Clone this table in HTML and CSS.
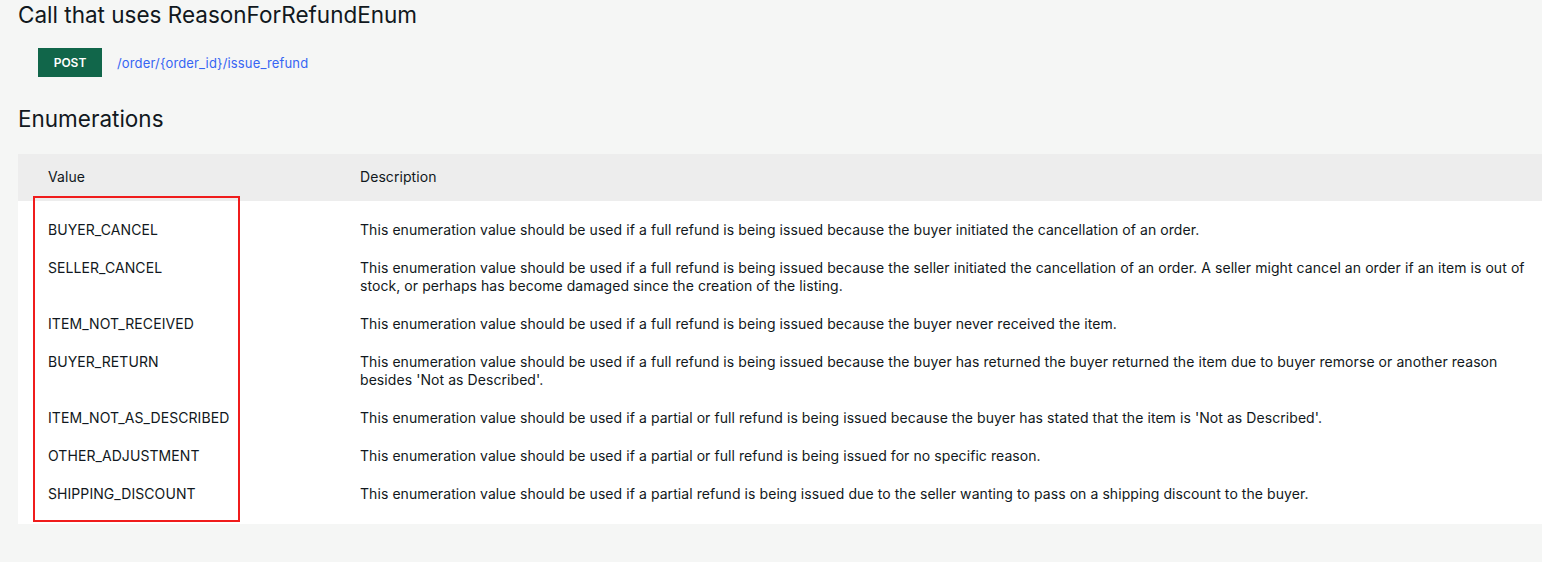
FILE: index.html
```html
<!DOCTYPE html>
<html lang="en">
<head>
    <meta charset="UTF-8">
    <meta name="viewport" content="width=device-width, initial-scale=1.0">
    <title>ReasonForRefundEnum</title>
    <link rel="stylesheet" href="styles.css">
</head>
<body>
    <div class="page">
        <!-- call section -->
        <h2 class="section-title">Call that uses ReasonForRefundEnum</h2>
        <div class="call-row">
            <span class="method">POST</span>
            <a class="call-link" href="#">/order/{order_id}/issue_refund</a>
        </div>

        <!-- enum table -->
        <h2 class="section-title enum-title">Enumerations</h2>
        <div class="table-wrap">
            <table class="enum-table">
                <thead>
                    <tr>
                        <th class="col-value">Value</th>
                        <th>Description</th>
                    </tr>
                </thead>
                <tbody>
                    <tr class="spacer"><td colspan="2"></td></tr>
                    <tr>
                        <td class="col-value">BUYER_CANCEL</td>
                        <td>This enumeration value should be used if a full refund is being issued because the buyer initiated the cancellation of an order.</td>
                    </tr>
                    <tr>
                        <td class="col-value">SELLER_CANCEL</td>
                        <td>This enumeration value should be used if a full refund is being issued because the seller initiated the cancellation of an order. A seller might cancel an order if an item is out of stock, or perhaps has become damaged since the creation of the listing.</td>
                    </tr>
                    <tr>
                        <td class="col-value">ITEM_NOT_RECEIVED</td>
                        <td>This enumeration value should be used if a full refund is being issued because the buyer never received the item.</td>
                    </tr>
                    <tr>
                        <td class="col-value">BUYER_RETURN</td>
                        <td>This enumeration value should be used if a full refund is being issued because the buyer has returned the buyer returned the item due to buyer remorse or another reason besides 'Not as Described'.</td>
                    </tr>
                    <tr>
                        <td class="col-value">ITEM_NOT_AS_DESCRIBED</td>
                        <td>This enumeration value should be used if a partial or full refund is being issued because the buyer has stated that the item is 'Not as Described'.</td>
                    </tr>
                    <tr>
                        <td class="col-value">OTHER_ADJUSTMENT</td>
                        <td>This enumeration value should be used if a partial or full refund is being issued for no specific reason.</td>
                    </tr>
                    <tr>
                        <td class="col-value">SHIPPING_DISCOUNT</td>
                        <td>This enumeration value should be used if a partial refund is being issued due to the seller wanting to pass on a shipping discount to the buyer.</td>
                    </tr>
                    <tr class="spacer spacer-end"><td colspan="2"></td></tr>
                </tbody>
            </table>
            <!-- annotation box -->
            <div class="highlight"></div>
        </div>
    </div>
</body>
</html>
```

FILE: styles.css
```css
body {
    margin: 0;
    background-color: #f5f6f5;
    font-family: Inter, "Liberation Sans", sans-serif;
    color: #111820;
}
.page {
    padding: 0 0 30px 18px;
}
.section-title {
    margin: 0;
    padding-top: 1px;
    font-size: 22.5px;
    font-weight: 400;
    line-height: 28px;
}
.enum-title {
    margin-top: 27px;
}
.call-row {
    display: flex;
    align-items: center;
    gap: 15px;
    margin: 19px 0 0 20px;
}
.method {
    display: inline-block;
    width: 64px;
    height: 29px;
    line-height: 29px;
    text-align: center;
    background-color: #11664a;
    color: white;
    font-size: 12px;
    font-weight: 600;
}
.call-link {
    color: #3665f3;
    text-decoration: none;
    font-size: 13px;
    letter-spacing: 0.15px;
}
.table-wrap {
    position: relative;
    margin-top: 21px;
}
.enum-table {
    width: 100%;
    border-collapse: collapse;
    background-color: white;
    font-size: 14px;
    letter-spacing: 0.07px;
}
.enum-table th {
    background-color: #ededed;
    height: 45px;
    padding: 0 0 2px 30px;
    text-align: left;
    font-weight: 400;
}
.enum-table td {
    padding: 10px 16px 10px 30px;
    line-height: 18px;
    vertical-align: top;
}
.enum-table .col-value {
    width: 282px;
    padding-right: 0;
}
.enum-table .spacer td {
    padding: 0;
    height: 10px;
}
.enum-table .spacer-end td {
    height: 11px;
}
.highlight {
    position: absolute;
    left: 15px;
    top: 42px;
    width: 203px;
    height: 322px;
    border: 2px solid #f01c1c;
}
```
